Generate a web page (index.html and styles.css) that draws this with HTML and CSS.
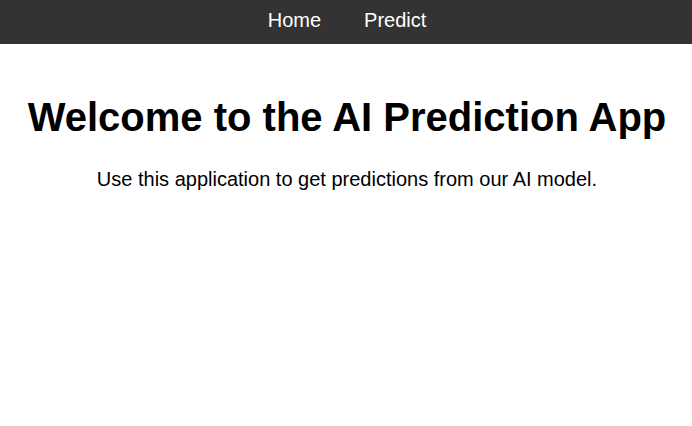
FILE: index.html
```html
<!DOCTYPE html>
<html>
<head>
<meta charset="utf-8">
<link rel="stylesheet" href="styles.css">
</head>
<body>
<nav class="nav">
  <a href="#">Home</a>
  <a href="#">Predict</a>
</nav>
<main class="content">
  <h1>Welcome to the AI Prediction App</h1>
  <p>Use this application to get predictions from our AI model.</p>
</main>
</body>
</html>
```
FILE: styles.css
```css
body {
  margin: 0;
  font-family: "Liberation Sans", Arial, sans-serif;
  background: #fff;
  color: #000;
}
.nav {
  background: #333;
  display: flex;
  justify-content: center;
  padding-left: 2px;
}
.nav a {
  color: #fff;
  text-decoration: none;
  font-size: 20px;
  line-height: 23px;
  padding: 9px 21.5px 12px;
}
.content {
  padding: 24px 20px 24px 22px;
  text-align: center;
}
.content h1 {
  font-size: 40px;
  margin: 27px 0 28px;
}
.content p {
  font-size: 20px;
  margin: 20px 0;
}
```
